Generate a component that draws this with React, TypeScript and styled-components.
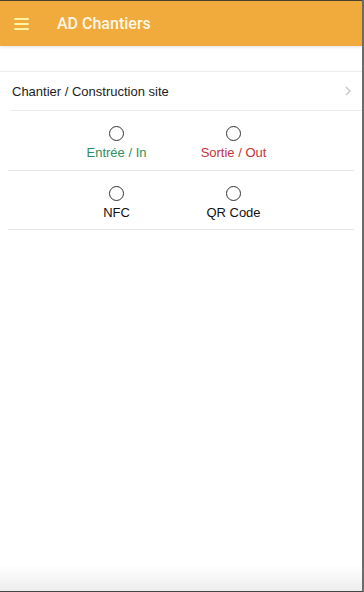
import * as React from "react";
import styled, { createGlobalStyle } from "styled-components";

const GlobalStyle = createGlobalStyle`
  html, body {
    margin: 0;
    padding: 0;
    background: #fff;
    font-family: "Liberation Sans", Arial, sans-serif;
  }
`;

const Screen = styled.div`
  width: 364px;
  height: 592px;
  box-sizing: border-box;
  border-right: 2px solid #6b6b6b;
  border-bottom: 1px solid #444;
  background: linear-gradient(to bottom, #fff 0, #fff 565px, #ededed 591px);
  display: flex;
  flex-direction: column;
  overflow: hidden;
`;

const Toolbar = styled.header`
  height: 46px;
  box-sizing: border-box;
  border-top: 1px solid #4a4030;
  background: #f1aa3c;
  display: flex;
  align-items: center;
  padding-left: 14px;
  box-shadow: 0 1px 3px rgba(0, 0, 0, 0.12);
`;

const MenuButton = styled.div`
  width: 15px;
  display: flex;
  flex-direction: column;
  gap: 3px;
  margin-top: 1px;
  span {
    display: block;
    height: 2px;
    background: #fff1a6;
    border-radius: 1px;
  }
`;

const Title = styled.h1`
  margin: 0 0 0 28px;
  font-size: 16px;
  font-weight: 500;
  color: #fff8e6;
  font-family: Roboto, "Liberation Sans", Arial, sans-serif;
`;

const Content = styled.main`
  padding-top: 25px;
  display: flex;
  flex-direction: column;
`;

const ListItem = styled.div`
  height: 38px;
  border-top: 1px solid #ededed;
  display: flex;
  align-items: center;
  justify-content: space-between;
  padding: 0 12px;
  font-size: 13px;
  color: #222;
  position: relative;
  &::after {
    content: "";
    position: absolute;
    left: 10px;
    right: 0;
    bottom: -1px;
    height: 1px;
    background: #ececec;
  }
`;

const Chevron = styled.svg`
  width: 8px;
  height: 10px;
  margin-right: -2px;
`;

const RadioRow = styled.div<{ $first?: boolean }>`
  margin: 0 8px;
  height: ${(p) => (p.$first ? "61px" : "59px")};
  border-bottom: 1px solid #e6e6e6;
  display: flex;
  padding-left: 50px;
  padding-top: ${(p) => (p.$first ? "16px" : "15px")};
  box-sizing: border-box;
`;

const RadioOption = styled.label<{ $color: string }>`
  width: 117px;
  display: flex;
  flex-direction: column;
  align-items: center;
  gap: 4px;
  font-size: 13px;
  color: ${(p) => p.$color};
`;

const Circle = styled.span`
  width: 13px;
  height: 13px;
  border: 1.4px solid #333;
  border-radius: 50%;
  box-sizing: content-box;
`;

export default function App() {
  return (
    <>
      <GlobalStyle />
      <Screen>
        <Toolbar>
          <MenuButton>
            <span />
            <span />
            <span />
          </MenuButton>
          <Title>AD Chantiers</Title>
        </Toolbar>
        <Content>
          <ListItem>
            Chantier / Construction site
            <Chevron viewBox="0 0 8 10">
              <path d="M2 1l4 4-4 4" fill="none" stroke="#c4c4c4" strokeWidth="1.3" />
            </Chevron>
          </ListItem>
          <RadioRow $first>
            <RadioOption $color="#2f8f5c">
              <Circle />
              Entrée / In
            </RadioOption>
            <RadioOption $color="#c8323c">
              <Circle />
              Sortie / Out
            </RadioOption>
          </RadioRow>
          <RadioRow>
            <RadioOption $color="#111">
              <Circle />
              NFC
            </RadioOption>
            <RadioOption $color="#111">
              <Circle />
              QR Code
            </RadioOption>
          </RadioRow>
        </Content>
      </Screen>
    </>
  );
}
